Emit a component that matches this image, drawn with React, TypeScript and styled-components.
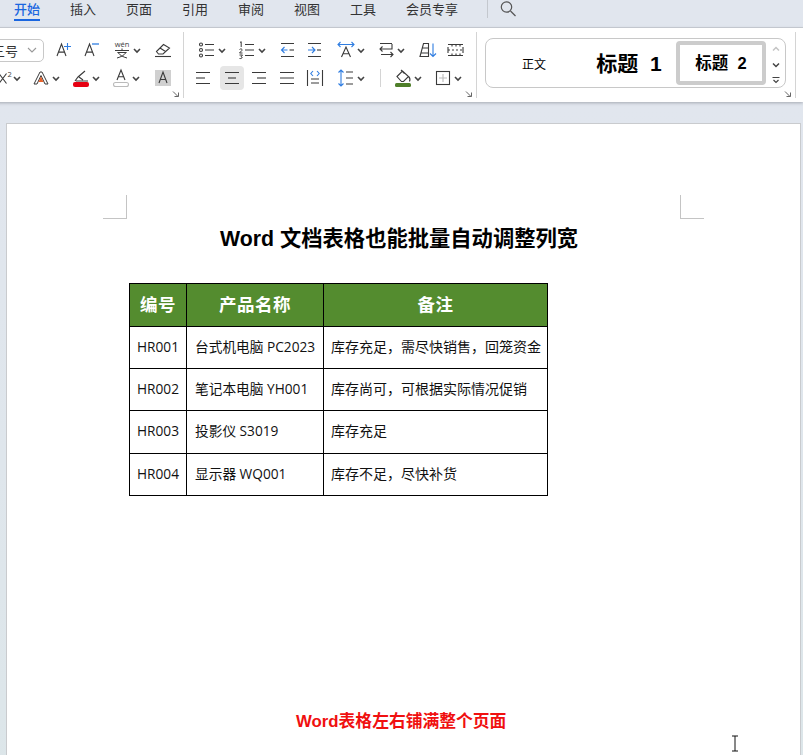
import React from 'react';
import styled, { createGlobalStyle } from 'styled-components';

const GlobalStyle = createGlobalStyle`
  html, body { margin: 0; padding: 0; background: #e1e6ee; }
  body { font-family: "Open Sans", "Noto Sans CJK SC", sans-serif; overflow: hidden; }
`;

const Window = styled.div`
  position: relative;
  width: 803px;
  height: 755px;
  overflow: hidden;
  display: flex;
  flex-direction: column;
`;

const TabBar = styled.div`
  height: 27px;
  flex: none;
  display: flex;
  align-items: flex-start;
  gap: 30px;
  padding-left: 14px;
  background: #e1e6ee;
  border-bottom: 1px solid #ccd0d6;
`;

const Tab = styled.div<{ $active?: boolean }>`
  height: 21px;
  line-height: 17px;
  font-size: 13px;
  white-space: nowrap;
  font-family: "Noto Sans CJK SC", sans-serif;
  font-weight: ${p => (p.$active ? 500 : 400)};
  color: ${p => (p.$active ? '#1a66e0' : '#333')};
  border-bottom: ${p => (p.$active ? '2px solid #1a66e0' : '2px solid transparent')};
  box-sizing: border-box;
`;

const TabDivider = styled.div`
  width: 1px;
  height: 18px;
  margin-left: -1px;
  background: #c4c8ce;
`;

const SearchBtn = styled.div`
  margin: 0 0 0 -19px;
  height: 18px;
  display: flex;
  align-items: center;
`;

const Ribbon = styled.div`
  height: 74px;
  flex: none;
  display: flex;
  margin-left: -20px;
  background: #fff;
  box-shadow: 0 1px 3px rgba(90, 95, 105, 0.45);
  position: relative;
  z-index: 1;
`;

const Group = styled.div<{ $w: number }>`
  position: relative;
  width: ${p => p.$w}px;
  height: 66px;
  margin-top: 4px;
  padding-top: 4px;
  box-sizing: border-box;
  border-right: 1px solid #d4d4d4;
  flex: none;
`;

const ToolRow = styled.div<{ $pad?: number }>`
  display: flex;
  align-items: center;
  height: 28px;
  padding-left: ${p => p.$pad ?? 0}px;
`;

const Tool = styled.div<{ $w?: number; $ml?: number }>`
  width: ${p => p.$w ?? 28}px;
  margin-left: ${p => p.$ml ?? 0}px;
  height: 24px;
  flex: none;
  display: flex;
  align-items: center;
  justify-content: center;
`;

const ActiveTool = styled(Tool)`
  background: #e6e6e6;
  border-radius: 4px;
  width: 24px;
  margin: 0 1px 0 3px;
`;

const RowDivider = styled.div`
  width: 1px;
  height: 18px;
  flex: none;
  margin: 0 7px 0 9px;
  background: #d4d4d4;
`;

const FontSelect = styled.div`
  width: 64px;
  height: 23px;
  flex: none;
  box-sizing: border-box;
  border: 1px solid #c8c8c8;
  border-radius: 5px;
  display: flex;
  align-items: center;
  justify-content: space-between;
  padding: 0 6px 0 11px;
  font-size: 13px;
  color: #333;
  font-family: "Noto Sans CJK SC", sans-serif;
`;

const CornerMark = styled.svg`
  position: absolute;
  right: 3px;
  bottom: 0px;
`;

const Gallery = styled.div`
  width: 301px;
  height: 50px;
  margin: 2px 0 0 8px;
  box-sizing: border-box;
  border: 1px solid #c8c8c8;
  border-radius: 8px;
  display: flex;
  align-items: center;
`;

const StyleCell = styled.div<{ $w: number; $size: number; $bold?: boolean; $lift?: number }>`
  width: ${p => p.$w}px;
  flex: none;
  text-align: center;
  white-space: pre;
  color: #000;
  padding-bottom: ${p => p.$lift ?? 0}px;
  font-size: ${p => p.$size}px;
  font-weight: ${p => (p.$bold ? 700 : 400)};
  font-family: "Liberation Sans", "Noto Sans CJK SC", sans-serif;
`;

const ActiveStyleCell = styled(StyleCell)`
  height: 44px;
  line-height: 36px;
  box-sizing: border-box;
  border: 4px solid #cccccc;
  border-radius: 4px;
`;

const GalleryScroll = styled.div`
  flex: 1;
  height: 100%;
  display: flex;
  flex-direction: column;
  align-items: center;
  justify-content: space-between;
  padding: 6px 0 3px;
  box-sizing: border-box;
`;

const Workspace = styled.div`
  flex: 1;
  padding: 21px 2px 0 6px;
  background: linear-gradient(180deg, #e1e6ee 0%, #dfe6ec 50%, #dce6e9 100%);
`;

const Paper = styled.div`
  height: 700px;
  box-sizing: border-box;
  background: #fff;
  border: 1px solid #c9cbce;
  padding: 71px 96px 0 96px;
`;

const CropRow = styled.div`
  display: flex;
  justify-content: space-between;
`;

const CropMark = styled.div<{ $right?: boolean }>`
  width: 24px;
  height: 24px;
  box-sizing: border-box;
  border-bottom: 1px solid #c4c4c4;
  ${p => (p.$right ? 'border-left: 1px solid #c4c4c4;' : 'border-right: 1px solid #c4c4c4;')}
`;

const Title = styled.h1`
  margin: 0 0 24px 117px;
  line-height: 40px;
  font-size: 21.3px;
  font-weight: 700;
  color: #000;
  white-space: nowrap;
  font-family: "Liberation Sans", "Noto Sans CJK SC", sans-serif;
`;

const Sheet = styled.table`
  margin-left: 26px;
  width: 419px;
  table-layout: fixed;
  border-collapse: collapse;
  color: #111;
`;

const Head = styled.th`
  padding: 0 0 2px;
  background: #548c2f;
  border: 1px solid #000;
  color: #fff;
  font-size: 17.5px;
  line-height: 24px;
  font-weight: 700;
  letter-spacing: 0.5px;
  text-align: center;
`;

const Cell = styled.td<{ $pad?: number; $size?: number }>`
  padding: 0 0 2px ${p => p.$pad ?? 8}px;
  border: 1px solid #000;
  font-size: ${p => p.$size ?? 13.7}px;
  line-height: 20px;
  white-space: nowrap;
  overflow: hidden;
`;

const Row = styled.tr<{ $h: number }>`
  height: ${p => p.$h}px;
`;

const Caption = styled.div`
  margin: 216px 0 0 193px;
  line-height: 20px;
  font-size: 16.8px;
  font-weight: 700;
  color: #f01010;
  white-space: nowrap;
  font-family: "Liberation Sans", "Noto Sans CJK SC", sans-serif;
`;

const IBeam = styled.svg`
  position: absolute;
  left: 731px;
  top: 735px;
`;

const ink = '#3a3a3a';
const blue = '#2f7de1';

const Ico: React.FC<{ children: React.ReactNode; w?: number }> = ({ children, w = 20 }) => (
  <svg width={w} height="20" viewBox={`0 0 ${w} 20`} fill="none" stroke={ink} strokeWidth="1.1">
    {children}
  </svg>
);

const Chev = () => (
  <svg width="10" height="20" viewBox="0 0 10 20" fill="none" stroke="#444" strokeWidth="1.6">
    <path d="M2 9l3 3 3-3" />
  </svg>
);

const letterA = (x: number, y0: number, y1: number, w: number) =>
  `M${x} ${y1}L${x + w / 2} ${y0}L${x + w} ${y1}M${x + w * 0.2} ${y0 + (y1 - y0) * 0.68}H${x + w * 0.8}`;

const lines = (ys: number[], x0: number, x1: number) => ys.map(y => `M${x0} ${y}H${x1}`).join('');

const Corner = () => (
  <CornerMark width="8" height="8" viewBox="0 0 8 8" fill="none" stroke="#666" strokeWidth="1">
    <path d="M1 1.5L6 6.5M6.5 2.5V6.5H2.5" />
  </CornerMark>
);

const ChevTool: React.FC<{ children: React.ReactNode }> = ({ children }) => (
  <Tool $w={40}>
    {children}
    <Chev />
  </Tool>
);

const rows = [
  { id: 'HR001', name: '台式机电脑 PC2023', note: '库存充足，需尽快销售，回笼资金', h: 42 },
  { id: 'HR002', name: '笔记本电脑 YH001', note: '库存尚可，可根据实际情况促销', h: 42 },
  { id: 'HR003', name: '投影仪 S3019', note: '库存充足', h: 43 },
  { id: 'HR004', name: '显示器 WQ001', note: '库存不足，尽快补货', h: 42 },
];

const tabs = ['插入', '页面', '引用', '审阅', '视图', '工具', '会员专享'];

function App() {
  return (
    <Window>
      <GlobalStyle />
      <TabBar>
        <Tab $active>开始</Tab>
        {tabs.map(t => (
          <Tab key={t}>{t}</Tab>
        ))}
        <TabDivider />
        <SearchBtn>
          <svg width="18" height="18" viewBox="0 0 18 18" fill="none" stroke="#555" strokeWidth="1.2">
            <circle cx="7.5" cy="7" r="5.2" />
            <path d="M11.5 11l5 5" />
          </svg>
        </SearchBtn>
      </TabBar>

      <Ribbon>
        <Group $w={204}>
          <ToolRow>
            <FontSelect>
              三号
              <svg width="10" height="6" viewBox="0 0 10 6" fill="none" stroke="#999" strokeWidth="1.1">
                <path d="M1 1l4 4 4-4" />
              </svg>
            </FontSelect>
            <Tool $ml={6}>
              <Ico>
                <path d={letterA(3, 4, 16, 9)} />
                <path d="M10 6.5h7M13.5 3v7" stroke={blue} />
              </Ico>
            </Tool>
            <Tool>
              <Ico>
                <path d={letterA(3, 4, 16, 9)} />
                <path d="M10 4h7" stroke={blue} strokeWidth="1.3" />
              </Ico>
            </Tool>
            <Tool $w={42}>
              <Ico>
                <text x="10" y="7" textAnchor="middle" fontSize="7.5" fill={ink} stroke="none" fontFamily="Open Sans">wén</text>
                <path d="M3 10.500h14M10 8.500v2M5.500 12.500h9M6 12.500c1.500 2.500 5 4.500 9 5.500M14 12.500c-1.500 2.500-5 4.500-9 5.500" strokeWidth="1" />
              </Ico>
              <Chev />
            </Tool>
            <Tool $ml={1}>
              <Ico>
                <path d="M3.5 11.5l7-7 6 3.5-6.500 6H5.500zM7 8l5.500 3.500" />
                <path d="M2 16.500h16" />
              </Ico>
            </Tool>
          </ToolRow>
          <ToolRow $pad={5}>
            <Tool $w={40}>
              <Ico w={24}>
                <path d="M11 5.500l7.500 10M18.500 5.500L11 15.500" />
                <text x="19.500" y="9" fontSize="7.500" fill={ink} stroke="none" fontFamily="Open Sans">2</text>
              </Ico>
              <Chev />
            </Tool>
            <Tool $w={40} $ml={1}>
              <Ico>
                <path d="M3 16L9 4h2l6 12h-3l-4-8.500L6 16z" strokeWidth="1" />
                <path d="M10 8.500L12.500 14h-5z" fill="#e8622a" stroke="none" />
              </Ico>
              <Chev />
            </Tool>
            <ChevTool>
              <Ico>
                <path d="M4 13l3-4 7-6M5 13h12M8 9l4 3" />
                <rect x="2" y="14" width="16" height="5" rx="2" fill="#e60012" stroke="none" />
              </Ico>
            </ChevTool>
            <ChevTool>
              <Ico>
                <path d={letterA(6, 2, 12, 8)} />
                <rect x="2.500" y="14.500" width="15" height="4" rx="2" fill="#fff" stroke="#bbb" />
              </Ico>
            </ChevTool>
            <Tool $ml={3}>
              <Ico>
                <rect x="2" y="2" width="16" height="16" fill="#d0d0d0" stroke="none" />
                <path d={letterA(6, 4, 15, 8)} />
              </Ico>
            </Tool>
          </ToolRow>
          <Corner />
        </Group>

        <Group $w={293}>
          <ToolRow $pad={8}>
            <ChevTool>
              <Ico>
                <circle cx="4" cy="4.500" r="1.500" />
                <circle cx="4" cy="10" r="1.500" />
                <circle cx="4" cy="15.500" r="1.500" />
                <path d={lines([4.5, 10, 15.5], 8, 17)} />
              </Ico>
            </ChevTool>
            <ChevTool>
              <Ico>
                <path d="M3 2.500l1.200-.8V7M2.500 9.500c1-1 3-.8 2.500.8L2.500 13H5.500M2.500 15h3L4 16.800c1.500-.2 1.800 2.200-1.500 1.700" strokeWidth="1" />
                <path d={lines([4.5, 10, 15.5], 8, 17)} />
              </Ico>
            </ChevTool>
            <Tool $ml={1}>
              <Ico>
                <path d={lines([3.5, 16.5], 4, 17)} />
                <path d="M12.500 10H17" />
                <path d="M10.500 10H4.500M7.500 7l-3 3 3 3" stroke={blue} />
              </Ico>
            </Tool>
            <Tool>
              <Ico>
                <path d={lines([3.5, 16.5], 3, 16)} />
                <path d="M12 10h4" />
                <path d="M3 10h6.500M7 7l3 3-3 3" stroke={blue} />
              </Ico>
            </Tool>
            <Tool $w={40} $ml={2}>
              <Ico>
                <path d={letterA(5.5, 7, 17, 9)} />
                <path d="M2 4.500h16M4.500 2L2 4.500 4.500 7M15.500 2L18 4.500 15.500 7" stroke={blue} />
              </Ico>
              <Chev />
            </Tool>
            <ChevTool>
              <Ico>
                <path d="M16 4v5H4M6.500 6.500L4 9l2.500 2.500" />
                <path d="M4 3.500h12M5 14.500h12M14.500 12l2.500 2.500L14.500 17" />
              </Ico>
            </ChevTool>
            <Tool $ml={3}>
              <Ico>
                <path d="M2 16.500L5.500 3.500h5v13zM3 13h7.500M4 8h6.500" />
                <path d="M15 3.500v13M12 13.500l3 3 3-3" stroke={blue} />
              </Ico>
            </Tool>
            <Tool $ml={-1}>
              <Ico>
                <path d="M3 4.500h15M3 15.500h15" />
                <path d="M3 7v6M18 7v6M7 4.500v2M11 4.500v2M15 4.500v2M7 13.500v2M11 13.500v2M15 13.500v2" />
                <path d="M3 10h15" strokeDasharray="2 2" />
              </Ico>
            </Tool>
          </ToolRow>
          <ToolRow $pad={5}>
            <Tool>
              <Ico>
                <path d={lines([4.5, 15.5], 3, 17)} />
                <path d="M3 10h9" />
              </Ico>
            </Tool>
            <ActiveTool>
              <Ico>
                <path d={lines([4.5, 15.5], 3, 17)} />
                <path d="M6 10h8" />
              </Ico>
            </ActiveTool>
            <Tool>
              <Ico>
                <path d={lines([4.5, 15.5], 3, 17)} />
                <path d="M8 10h9" />
              </Ico>
            </Tool>
            <Tool>
              <Ico>
                <path d={lines([4.5, 10, 15.5], 3, 17)} />
              </Ico>
            </Tool>
            <Tool>
              <Ico>
                <path d="M2.500 2v16M17.500 2v16M6 11h8M6 15h8" />
                <path d="M8 3L5.800 5.500 8 8M12 3l2.200 2.500L12 8" stroke={blue} />
              </Ico>
            </Tool>
            <Tool $w={40} $ml={2}>
              <Ico>
                <path d="M5 2v16M2.500 4.500L5 2l2.500 2.500M2.500 15.500L5 18l2.500-2.500" stroke={blue} />
                <path d={lines([4, 10, 16], 10, 17)} />
              </Ico>
              <Chev />
            </Tool>
            <RowDivider />
            <Tool $w={40}>
              <Ico>
                <path d="M4 8.500L9.500 3l6 5.500-5 5H8.500zM8 2l3.500 3.500" />
                <path d="M15.500 8.500c1.500 1.500 2 3 1 5" />
                <rect x="2" y="15" width="16" height="4" rx="1.500" fill="#4f7f2a" stroke="none" />
              </Ico>
              <Chev />
            </Tool>
            <Tool $w={40}>
              <Ico>
                <rect x="3.500" y="3.500" width="13" height="13" />
                <path d="M10 6v8M6 10h8" stroke="#bbb" />
              </Ico>
              <Chev />
            </Tool>
          </ToolRow>
          <Corner />
        </Group>

        <Group $w={319}>
          <Gallery>
            <StyleCell $w={96} $size={12}>正文</StyleCell>
            <StyleCell $w={94} $size={21} $bold $lift={2}>{'标题  1'}</StyleCell>
            <ActiveStyleCell $w={90} $size={16.500} $bold>{'标题  2'}</ActiveStyleCell>
            <GalleryScroll>
              <svg width="10" height="8" viewBox="0 0 10 8" fill="none" stroke="#c4c4c4" strokeWidth="1.500">
                <path d="M2 5.500l3-3 3 3" />
              </svg>
              <svg width="10" height="8" viewBox="0 0 10 8" fill="none" stroke="#444" strokeWidth="1.500">
                <path d="M2 2.500l3 3 3-3" />
              </svg>
              <svg width="10" height="8" viewBox="0 0 10 8" fill="none" stroke="#444" strokeWidth="1.200">
                <path d="M1.500 1.500h7M2.500 4l2.500 2.500L7.500 4" />
              </svg>
            </GalleryScroll>
          </Gallery>
          <Corner />
        </Group>
      </Ribbon>

      <Workspace>
        <Paper>
          <CropRow>
            <CropMark />
            <CropMark $right />
          </CropRow>
          <Title>Word 文档表格也能批量自动调整列宽</Title>
          <Sheet>
            <colgroup>
              <col width="57" />
              <col width="137" />
              <col width="224" />
            </colgroup>
            <thead>
              <Row $h={43}>
                <Head>编号</Head>
                <Head>产品名称</Head>
                <Head>备注</Head>
              </Row>
            </thead>
            <tbody>
              {rows.map(r => (
                <Row key={r.id} $h={r.h}>
                  <Cell $pad={7}>{r.id}</Cell>
                  <Cell>{r.name}</Cell>
                  <Cell $pad={7} $size={14}>{r.note}</Cell>
                </Row>
              ))}
            </tbody>
          </Sheet>
          <Caption>Word表格左右铺满整个页面</Caption>
        </Paper>
      </Workspace>

      <IBeam width="8" height="17" viewBox="0 0 8 17" fill="none" stroke="#111" strokeWidth="1">
        <path d="M1 1h6M4 1v15M1 16h6" />
      </IBeam>
    </Window>
  );
}

export default App;
